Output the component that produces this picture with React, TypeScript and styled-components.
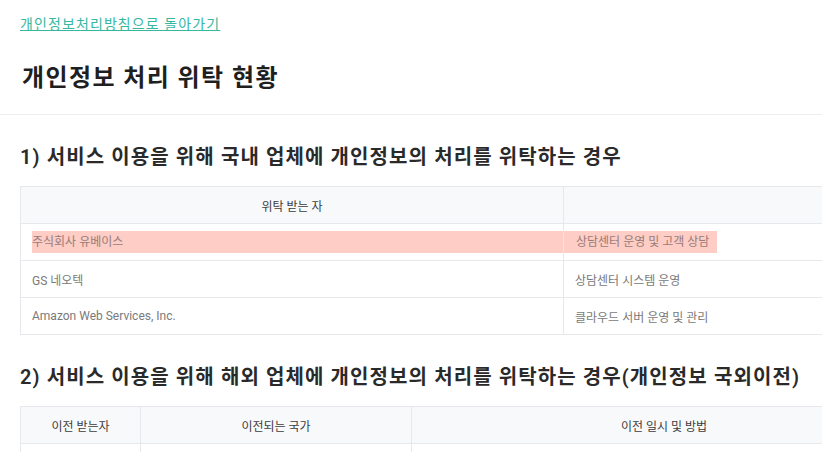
import React from "react";
import styled, { createGlobalStyle } from "styled-components";

const GlobalStyle = createGlobalStyle`
  body {
    margin: 0;
    background: #fff;
    font-family: Roboto, "Noto Sans CJK KR", sans-serif;
    overflow: hidden;
  }
`;

const domestic = [
  { name: "주식회사 유베이스", task: "상담센터 운영 및 고객 상담", marked: true },
  { name: "GS 네오텍", task: "상담센터 시스템 운영" },
  { name: "Amazon Web Services, Inc.", task: "클라우드 서버 운영 및 관리" },
];

const App = () => {
  return (
    <Page>
      <GlobalStyle />
      <Top>
        <BackLink href="#">개인정보처리방침으로 돌아가기</BackLink>
        <Title>개인정보 처리 위탁 현황</Title>
      </Top>

      <Content>
        <SectionTitle>1) 서비스 이용을 위해 국내 업체에 개인정보의 처리를 위탁하는 경우</SectionTitle>
        <Table>
          <colgroup>
            <col style={{ width: 543 }} />
            <col />
          </colgroup>
          <thead>
            <tr>
              <Th>위탁 받는 자</Th>
              <Th />
            </tr>
          </thead>
          <tbody>
            {domestic.map((row) => (
              <tr key={row.name}>
                <Td $marked={row.marked} $first>
                  {row.marked ? <Mark $fill>{row.name}</Mark> : row.name}
                </Td>
                <Td $marked={row.marked}>
                  {row.marked ? <Mark>{row.task}</Mark> : row.task}
                </Td>
              </tr>
            ))}
          </tbody>
        </Table>

        <SectionTitle>2) 서비스 이용을 위해 해외 업체에 개인정보의 처리를 위탁하는 경우(개인정보 국외이전)</SectionTitle>
        <Table>
          <colgroup>
            <col style={{ width: 120 }} />
            <col style={{ width: 271 }} />
            <col />
          </colgroup>
          <thead>
            <tr>
              <Th>이전 받는자</Th>
              <Th>이전되는 국가</Th>
              <Th>이전 일시 및 방법</Th>
            </tr>
          </thead>
          <tbody>
            <tr>
              <Td />
              <Td />
              <Td />
            </tr>
          </tbody>
        </Table>
      </Content>
    </Page>
  );
};

export default App;

const Page = styled.div`
  width: 100%;
`;

const Top = styled.header`
  padding: 14px 20px 19px;
  border-bottom: 1px solid #eeeeee;
`;

const BackLink = styled.a`
  display: inline-block;
  font-size: 14px;
  line-height: 20px;
  letter-spacing: 1.1px;
  color: #35b89f;
  text-decoration: underline;
`;

const Title = styled.h1`
  margin: 27px 0 0 2px;
  font-size: 24px;
  line-height: 34px;
  letter-spacing: 1.4px;
  font-weight: 700;
  color: #1f1f1f;
`;

const Content = styled.main`
  padding: 0 20px;
`;

const SectionTitle = styled.h2`
  margin: 27px 0 14px;
  font-size: 20px;
  line-height: 30px;
  letter-spacing: 1.1px;
  font-weight: 600;
  color: #2a2a2a;
  white-space: nowrap;
`;

const Table = styled.table`
  width: 897px;
  border-collapse: collapse;
  table-layout: fixed;
  font-size: 12px;
`;

const Th = styled.th`
  height: 36px;
  padding: 0 11px;
  background: #f8f9fb;
  border: 1px solid #e6e8eb;
  font-weight: 400;
  color: #3c3c3c;
  text-align: center;
`;

const Td = styled.td<{ $marked?: boolean; $first?: boolean }>`
  height: 36px;
  padding: ${(p) => (p.$marked ? (p.$first ? "0 0 0 11px" : "0") : "0 11px")};
  border: 1px solid #e6e8eb;
  color: #7a7a7a;
  white-space: nowrap;
`;

const Mark = styled.span<{ $fill?: boolean }>`
  display: ${(p) => (p.$fill ? "block" : "inline-block")};
  padding: ${(p) => (p.$fill ? "0" : "0 8px 0 12px")};
  line-height: 22px;
  background: #fdcdc6;
  color: #9a7b76;
`;
